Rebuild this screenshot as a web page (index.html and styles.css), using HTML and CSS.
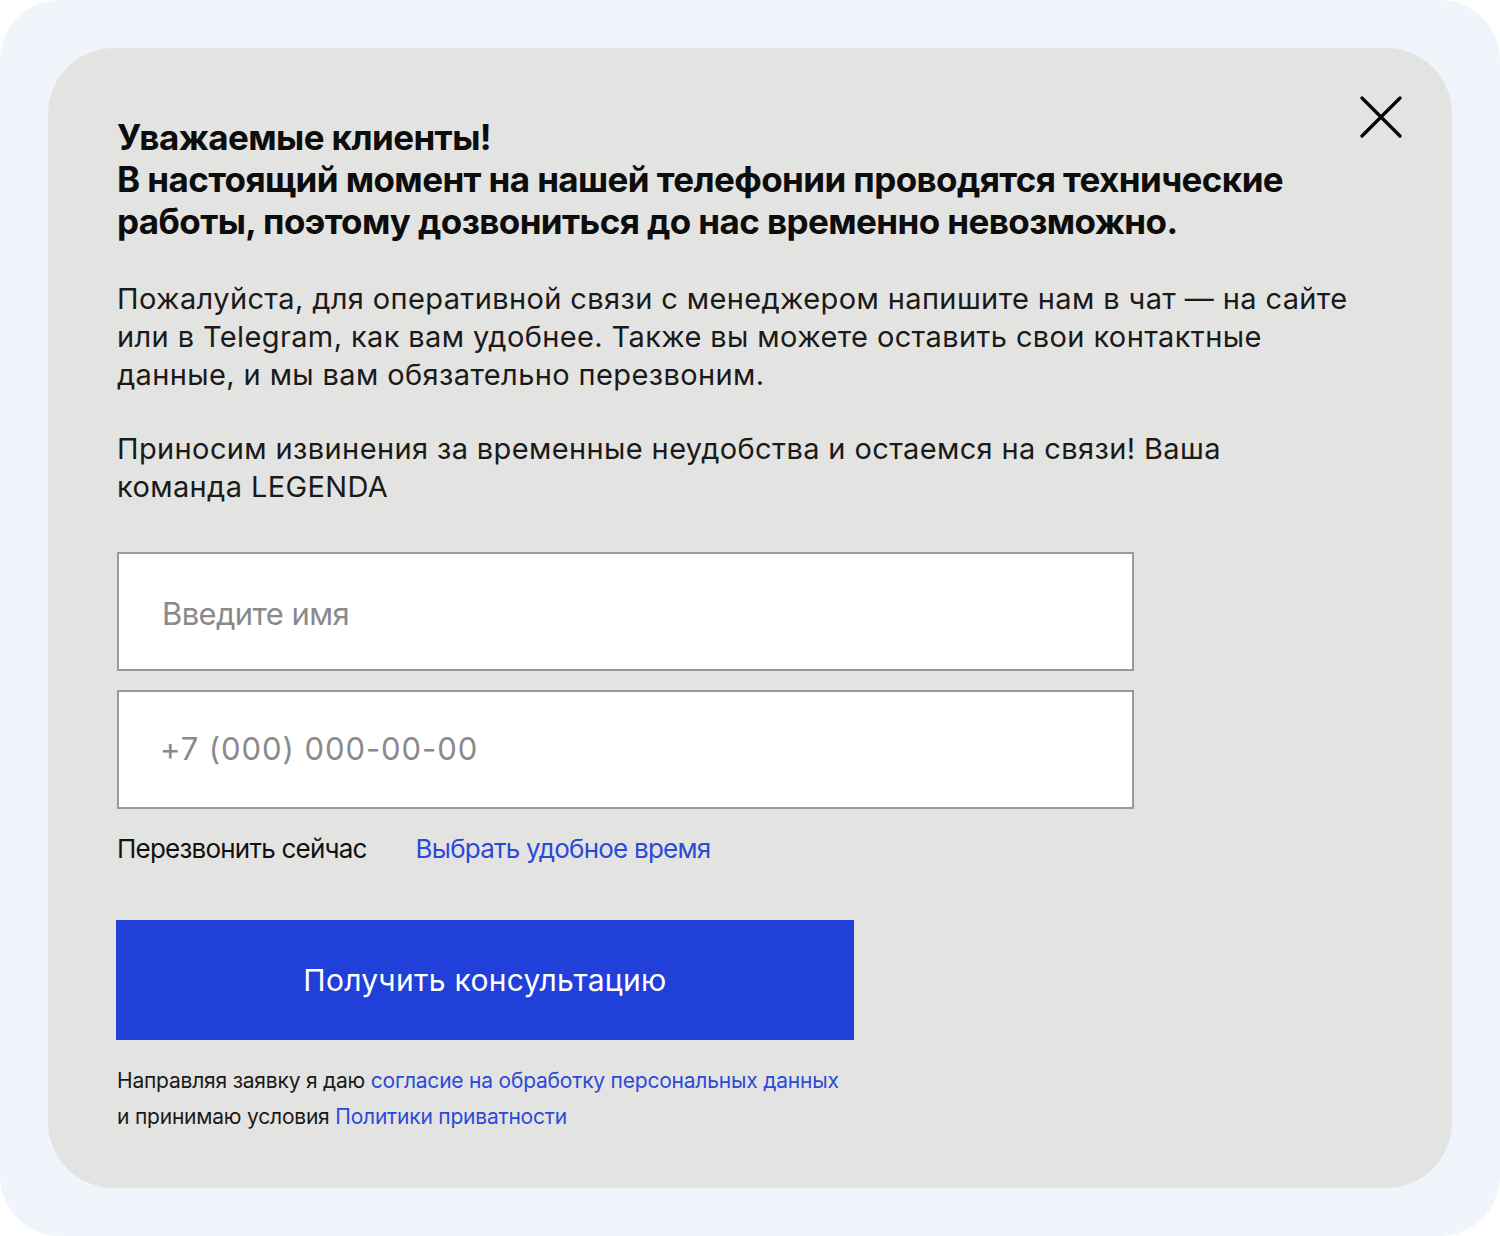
FILE: index.html
```html
<!DOCTYPE html>
<html lang="ru">
<head>
<meta charset="utf-8">
<title>LEGENDA</title>
<link rel="stylesheet" href="styles.css">
</head>
<body>
<div class="frame">
  <div class="card">
    <button class="close" aria-label="Закрыть">
      <svg width="42" height="42" viewBox="0 0 42 42"><path d="M2 2 L40 40 M40 2 L2 40" stroke="#000" stroke-width="3.2" stroke-linecap="round" fill="none"/></svg>
    </button>
    <h1 class="title">Уважаемые клиенты!<br>В настоящий момент на нашей телефонии проводятся технические<br>работы, поэтому дозвониться до нас временно невозможно.</h1>
    <p class="text">Пожалуйста, для оперативной связи с менеджером напишите нам в чат — на сайте<br>или в Telegram, как вам удобнее. Также вы можете оставить свои контактные<br>данные, и мы вам обязательно перезвоним.</p>
    <p class="text text-last">Приносим извинения за временные неудобства и остаемся на связи! Ваша<br>команда LEGENDA</p>
    <form class="form">
      <input class="field" type="text" placeholder="Введите имя">
      <input class="field field-phone" type="tel" placeholder="+7 (000) 000-00-00">
      <div class="options">
        <span class="opt">Перезвонить сейчас</span>
        <span class="opt opt-link">Выбрать удобное время</span>
      </div>
      <button class="submit" type="button">Получить консультацию</button>
      <p class="legal">Направляя заявку я даю <a href="#">согласие на обработку персональных данных</a><br>и принимаю условия <a href="#">Политики приватности</a></p>
    </form>
  </div>
</div>
</body>
</html>
```
FILE: styles.css
```css
* { box-sizing: border-box; }
html, body { margin: 0; padding: 0; background: #ffffff; }
body { font-family: "Inter", "Noto Sans", sans-serif; color: #111; }

.frame {
  width: 1500px;
  height: 1236px;
  background: #f0f5fc;
  border-radius: 60px;
  padding: 48px;
}

.card {
  position: relative;
  height: 1140px;
  background: #e3e3e1;
  border-radius: 66px;
  padding: 68px 40px 0 69px;
}

.close {
  position: absolute;
  top: 48px;
  left: 1312px;
  width: 42px;
  height: 42px;
  padding: 0;
  border: 0;
  background: none;
  cursor: pointer;
}
.close svg { display: block; }

.title {
  margin: 0;
  white-space: nowrap;
  font-size: 35px;
  line-height: 42px;
  font-weight: 700;
  letter-spacing: -0.017em;
  color: #0d0d0d;
}

.text {
  margin: 38px 0 0;
  white-space: nowrap;
  font-size: 29px;
  line-height: 38px;
  font-weight: 400;
  letter-spacing: 0.013em;
  color: #1a1a1a;
}
.text-last { margin-top: 36px; }

.form { margin-top: 46px; }

.field {
  display: block;
  width: 1017px;
  height: 119px;
  margin: 0;
  padding: 4px 0 0 43px;
  border: 2px solid #9a9a9a;
  border-radius: 0;
  background: #ffffff;
  font-family: inherit;
  font-size: 31px;
  letter-spacing: -0.02em;
  color: #111;
  outline: none;
}
.field::placeholder { color: #8a8a8a; }
.field-phone { margin-top: 19px; padding: 0 0 2px 41px; letter-spacing: 0.03em; }

.options {
  display: flex;
  gap: 49px;
  margin-top: 24px;
  font-size: 26px;
  line-height: 32px;
  letter-spacing: -0.03em;
}
.opt { color: #111; }
.opt-link { color: #2c4ad8; }

.submit {
  display: block;
  width: 738px;
  height: 120px;
  margin: 55px 0 0 -1px;
  border: 0;
  background: #213fd9;
  color: #ffffff;
  font-family: inherit;
  font-size: 30px;
  letter-spacing: 0.01em;
  cursor: pointer;
}

.legal {
  margin: 23px 0 0;
  font-size: 21px;
  line-height: 36px;
  letter-spacing: -0.01em;
  color: #1a1a1a;
}
.legal a { color: #2c4ad8; text-decoration: none; }
```
